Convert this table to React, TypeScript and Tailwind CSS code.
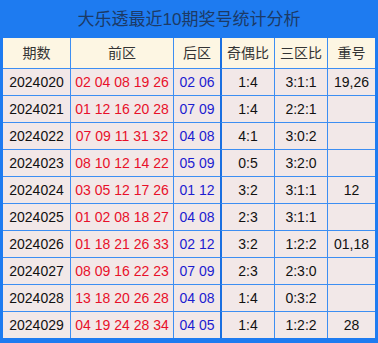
const rows = [
  ['2024020', '02 04 08 19 26', '02 06', '1:4', '3:1:1', '19,26'],
  ['2024021', '01 12 16 20 28', '07 09', '1:4', '2:2:1', ''],
  ['2024022', '07 09 11 31 32', '04 08', '4:1', '3:0:2', ''],
  ['2024023', '08 10 12 14 22', '05 09', '0:5', '3:2:0', ''],
  ['2024024', '03 05 12 17 26', '01 12', '3:2', '3:1:1', '12'],
  ['2024025', '01 02 08 18 27', '04 08', '2:3', '3:1:1', ''],
  ['2024026', '01 18 21 26 33', '02 12', '3:2', '1:2:2', '01,18'],
  ['2024027', '08 09 16 22 23', '07 09', '2:3', '2:3:0', ''],
  ['2024028', '13 18 20 26 28', '04 08', '1:4', '0:3:2', ''],
  ['2024029', '04 19 24 28 34', '04 05', '1:4', '1:2:2', '28'],
];

const headers = ['期数', '前区', '后区', '奇偶比', '三区比', '重号'];

const font = { fontFamily: '"Liberation Sans", "Noto Sans CJK SC", sans-serif' };

export default function App() {
  return (
    <div className="w-[378px] h-[343px] bg-[#1e7bf0] px-[3px] pb-[5px]" style={font}>
      <div className="h-[38px] flex items-center justify-center text-[17px] text-[#1c3a66] pt-[2px]">
        大乐透最近10期奖号统计分析
      </div>
      <div className="grid grid-cols-[67px_103px_47px_54px_53px_48px] text-[14px]">
        {headers.map((h, i) => (
          <div
            key={h}
            className={
              'h-[30px] flex items-center justify-center bg-[#fdf6e3] text-[#333] ' +
              (i === 0 ? '' : i === 3 ? 'border-l-2 border-[#1a6fe0]' : 'border-l border-[#3d8ef2]')
            }
          >
            {h}
          </div>
        ))}
        {rows.map((r) =>
          r.map((c, i) => (
            <div
              key={r[0] + i}
              className={
                'h-[27px] flex items-center justify-center bg-[#f2e8e8] border-t border-t-[#3d8ef2] ' +
                (i === 0 ? 'text-[#111] ' : i === 3 ? 'border-l-2 border-l-[#1a6fe0] ' : 'border-l border-l-[#3d8ef2] ') +
                (i === 1 ? 'text-[#e8102a]' : i === 2 ? 'text-[#1c1cd0]' : 'text-[#111]')
              }
            >
              {c}
            </div>
          ))
        )}
      </div>
    </div>
  );
}
